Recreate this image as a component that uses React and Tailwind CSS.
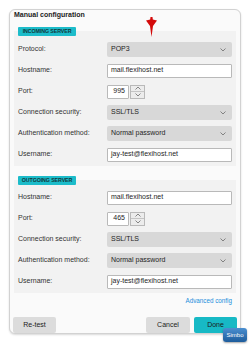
import React from "react";

const Chevron = ({ up = false }) => (
  <svg width="6" height="4" viewBox="0 0 6 4" className="block">
    <path
      d={up ? "M0.5 3.5 L3 1 L5.5 3.5" : "M0.5 0.5 L3 3 L5.5 0.5"}
      fill="none"
      stroke="#6b6b6b"
      strokeWidth="0.8"
    />
  </svg>
);

function Select({ value }) {
  return (
    <div className="w-[125px] h-[15px] bg-[#d8d8d8] rounded-[2px] flex items-center justify-between pl-[4px] pr-[6px]">
      <span className="text-[7px] text-[#1e1e1e]">{value}</span>
      <Chevron />
    </div>
  );
}

function Input({ value }) {
  return (
    <div className="w-[125px] h-[14px] bg-white border border-[#b9b9b9] rounded-[1px] flex items-center pl-[3px]">
      <span className="text-[7px] text-[#1e1e1e]">{value}</span>
    </div>
  );
}

function Port({ value }) {
  return (
    <div className="flex items-center gap-[1px]">
      <div className="w-[22px] h-[14px] bg-white border border-[#b9b9b9] rounded-[1px] flex items-center justify-end pr-[3px]">
        <span className="text-[7px] text-[#1e1e1e]">{value}</span>
      </div>
      <div className="w-[15px] h-[14px] border border-[#b9b9b9] bg-[#ececec] flex flex-col">
        <div className="flex-1 flex items-center justify-center border-b border-[#c4c4c4]">
          <Chevron up />
        </div>
        <div className="flex-1 flex items-center justify-center">
          <Chevron />
        </div>
      </div>
    </div>
  );
}

function Row({ label, children }) {
  return (
    <div className="h-[15px] flex items-center justify-between">
      <span className="text-[7px] text-[#333]">{label}</span>
      <div className="w-[125px] flex items-center">{children}</div>
    </div>
  );
}

function Section({ title, pt, children }) {
  return (
    <div className="flex flex-col">
      <div className="relative z-10 ml-[4px] -mb-[5px] w-[58px] h-[9px] bg-[#1cbcca] rounded-[1px] flex items-center justify-center">
        <span className="text-[5.3px] font-bold text-[#12383c] tracking-[-0.1px] uppercase">{title}</span>
      </div>
      <div className={`bg-[#f2f2f2] px-[4px] ${pt} pb-[4px] flex flex-col gap-[6px]`}>{children}</div>
    </div>
  );
}

export default function App() {
  return (
    <div className="w-[250px] h-[345px] bg-white relative overflow-hidden font-['Liberation_Sans',Arial,sans-serif]">
      <div className="ml-[9px] mt-[9px] w-[232px] rounded-[6px] border border-[#d2d2d2] bg-[#fafafa] shadow-[0_1px_2px_rgba(0,0,0,0.15)] px-[4px] pb-[0px] flex flex-col">
        <div className="h-[10px] leading-[10px] text-[7px] font-bold text-[#222]">Manual configuration</div>

        <div className="mt-[7px]">
          <Section title="Incoming server" pt="pt-[11px]">
            <Row label="Protocol:"><Select value="POP3" /></Row>
            <Row label="Hostname:"><Input value="mail.flexihost.net" /></Row>
            <Row label="Port:"><Port value="995" /></Row>
            <Row label="Connection security:"><Select value="SSL/TLS" /></Row>
            <Row label="Authentication method:"><Select value="Normal password" /></Row>
            <Row label="Username:"><Input value="jay-test@flexihost.net" /></Row>
          </Section>
        </div>

        <div className="mt-[10px]">
          <Section title="Outgoing server" pt="pt-[10px]">
            <Row label="Hostname:"><Input value="mail.flexihost.net" /></Row>
            <Row label="Port:"><Port value="465" /></Row>
            <Row label="Connection security:"><Select value="SSL/TLS" /></Row>
            <Row label="Authentication method:"><Select value="Normal password" /></Row>
            <Row label="Username:"><Input value="jay-test@flexihost.net" /></Row>
          </Section>
        </div>

        <div className="mt-[3px] h-[10px] leading-[10px] text-right pr-[4px] text-[6.3px] text-[#1a8fdc]">Advanced config</div>

        <div className="mt-[11px] -mx-[1px] flex items-center">
          <button className="w-[43px] h-[16px] bg-[#dcdcdc] rounded-[2px] text-[7px] text-[#222]">Re-test</button>
          <div className="flex-1" />
          <button className="w-[44px] h-[16px] bg-[#dcdcdc] rounded-[2px] text-[7px] text-[#222]">Cancel</button>
          <button className="ml-[4px] w-[43px] h-[16px] bg-[#17b9c5] rounded-[2px] text-[7px] text-[#1a1a1a]">Done</button>
        </div>
      </div>

      {/* red pointer arrow */}
      <svg className="absolute left-[146px] top-[17px]" width="11" height="20" viewBox="0 0 11 20">
        <polygon points="4.5,0 6.5,0 6.8,2.5 11,3.5 7,9 5.5,20 4,9 0,3.5 4.2,2.5" fill="#d40a0a" />
      </svg>

      {/* Simbo badge */}
      <div className="absolute left-[223px] top-[328px] w-[24px] h-[14px] rounded-[3px] bg-gradient-to-b from-[#4b8fd0] to-[#1d5c9c] shadow-[0_1px_2px_rgba(0,0,0,0.35)] flex items-center justify-center">
        <span className="text-[6px] text-white">Simbo</span>
      </div>
    </div>
  );
}
